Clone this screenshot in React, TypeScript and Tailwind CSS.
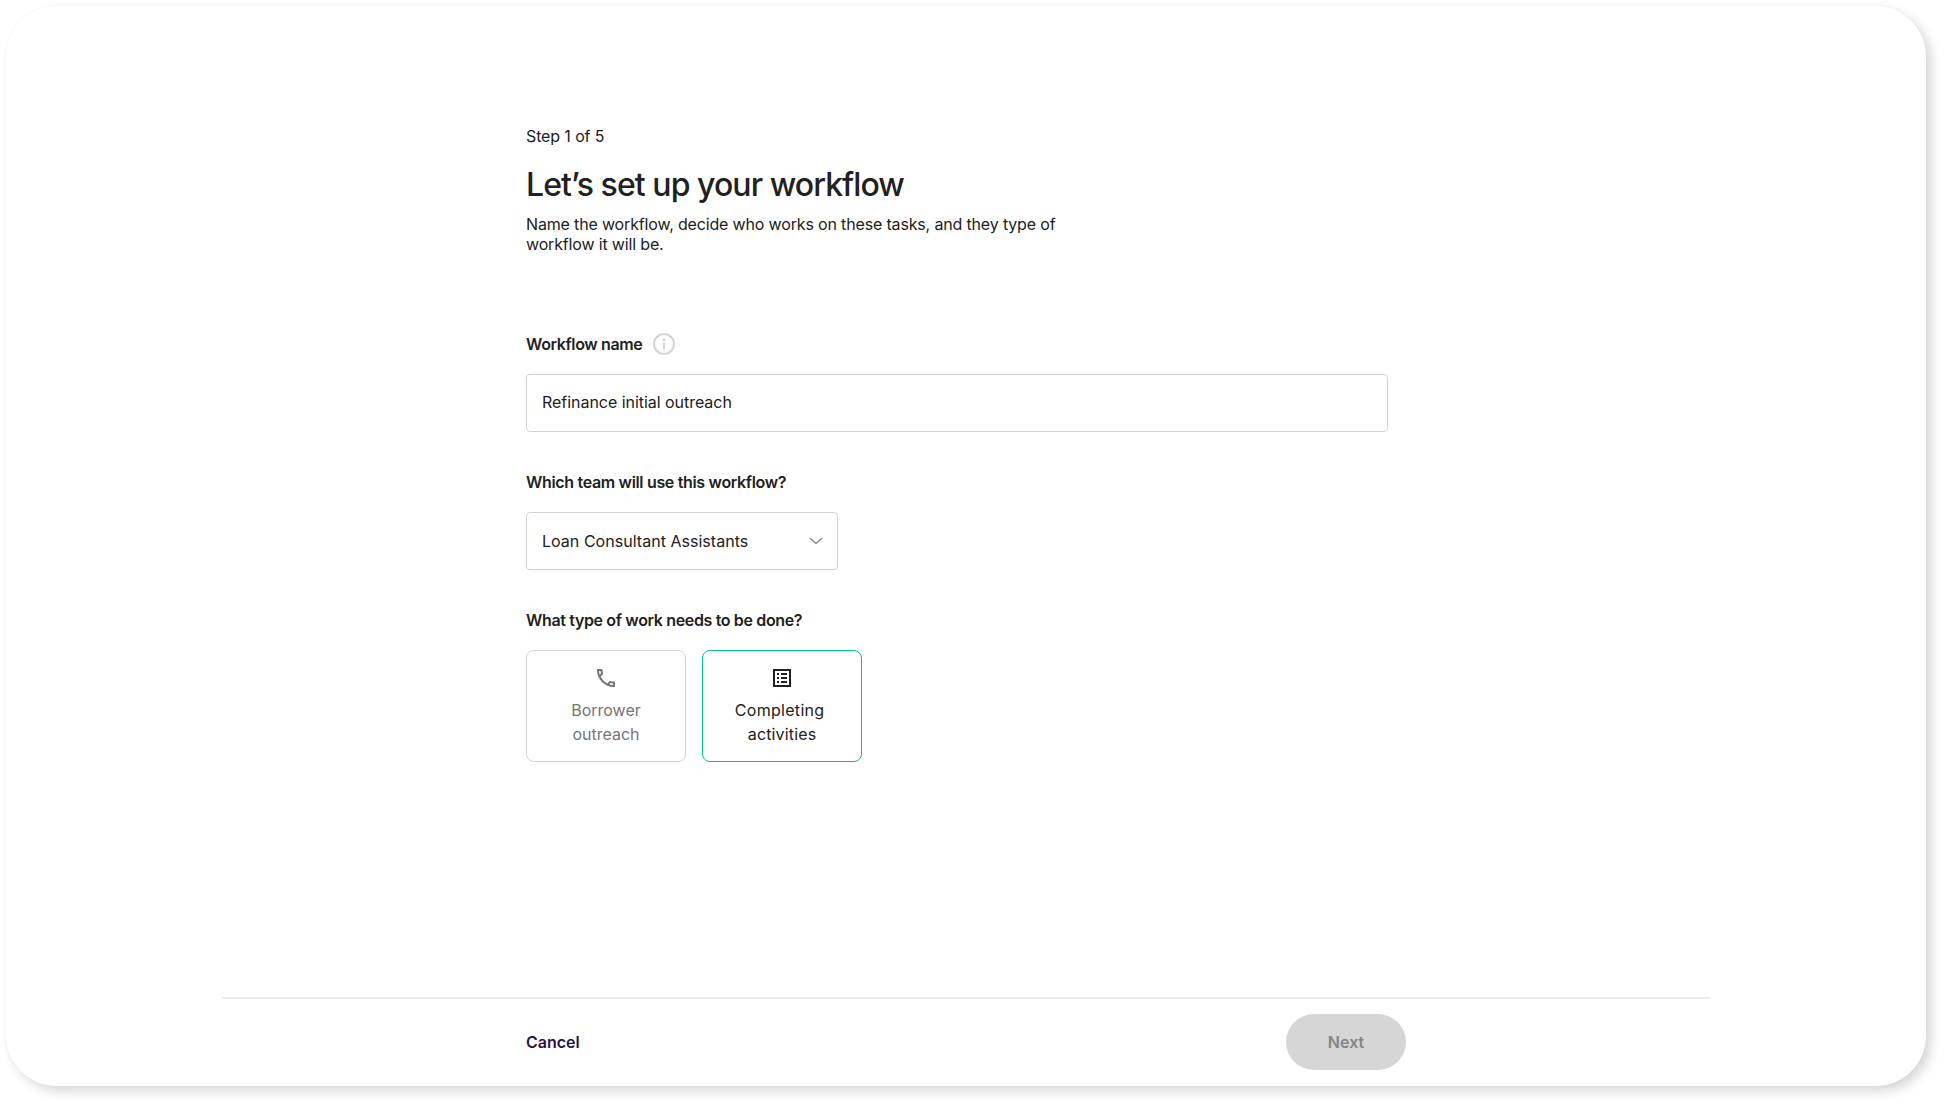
import type { ReactNode } from "react";

function InfoIcon() {
  return (
    <svg className="size-[22px] shrink-0" viewBox="0 0 22 22" fill="none">
      <circle cx="11" cy="11" r="10" stroke="#d4d4d4" strokeWidth="2" />
      <circle cx="11" cy="6.8" r="1.3" fill="#d4d4d4" />
      <path d="M11 9.4V16.6" stroke="#d4d4d4" strokeWidth="2" />
    </svg>
  );
}

function ChevronIcon() {
  return (
    <svg className="h-2 w-[14px] shrink-0" viewBox="0 0 14 8" fill="none">
      <path d="M1 1.2L7 6.3L13 1.2" stroke="#8a8a8a" strokeWidth="1.5" />
    </svg>
  );
}

function PhoneIcon() {
  return (
    <svg className="size-6" viewBox="0 0 24 24" fill="currentColor">
      <path d="M6.54 5c.06.89.21 1.76.45 2.59l-1.2 1.2c-.41-1.2-.67-2.47-.76-3.79h1.51m9.86 12.02c.85.24 1.72.39 2.6.45v1.49c-1.32-.09-2.59-.35-3.8-.75l1.2-1.19M7.5 3H4c-.55 0-1 .45-1 1 0 9.39 7.61 17 17 17 .55 0 1-.45 1-1v-3.49c0-.55-.45-1-1-1-1.24 0-2.45-.2-3.57-.57a.84.84 0 0 0-.31-.05c-.26 0-.51.1-.71.29l-2.2 2.2a15.15 15.15 0 0 1-6.59-6.59l2.2-2.2c.28-.28.36-.67.25-1.02A11.36 11.36 0 0 1 8.5 4c0-.55-.45-1-1-1z" />
    </svg>
  );
}

function ListIcon() {
  return (
    <svg className="size-6" viewBox="0 0 24 24" fill="currentColor">
      <path d="M11 7h6v2h-6zM11 11h6v2h-6zM11 15h6v2h-6zM7 7h2v2H7zM7 11h2v2H7zM7 15h2v2H7z" />
      <path fillRule="evenodd" d="M3 3h18v18H3zM5 5v14h14V5z" />
    </svg>
  );
}

function WorkCard({ icon, children, className }: { icon: ReactNode; children: ReactNode; className: string }) {
  return (
    <button className={`flex h-28 w-40 flex-col items-center gap-2 rounded-lg border pt-[15px] ${className}`}>
      {icon}
      <span className="text-center leading-6">{children}</span>
    </button>
  );
}

export default function App() {
  return (
    <div className="h-[1104px] w-[1944px] overflow-hidden bg-white p-1.5 font-['Inter',sans-serif] text-base text-[#212121]">
      <main className="flex h-[1080px] w-[1920px] flex-col rounded-[50px] bg-white shadow-[0_0_1px_rgba(0,0,0,0.08),5px_5px_11px_rgba(0,0,0,0.16)]">
        <div className="ml-[520px] flex w-[862px] flex-1 flex-col pt-[118px]">
          <p className="leading-6 tracking-[-0.12px]">Step 1 of 5</p>
          <h1 className="mt-[17px] text-[32px] leading-10 font-medium tracking-[-0.93px]">Let’s set up your workflow</h1>
          <p className="mt-[9px] leading-5 tracking-[-0.16px]">
            Name the workflow, decide who works on these tasks, and they type of
            <br />
            workflow it will be.
          </p>

          <div className="mt-[78px] flex h-6 items-center gap-[11px]">
            <label className="font-semibold tracking-[-0.37px]">Workflow name</label>
            <InfoIcon />
          </div>
          <div className="mt-[18px] flex h-[58px] items-center rounded border border-[#d4d4d4] px-[15px] pb-0.5">
            <span className="tracking-[-0.04px]">Refinance initial outreach</span>
          </div>

          <label className="mt-[38px] leading-6 font-semibold tracking-[-0.33px]">Which team will use this workflow?</label>
          <div className="mt-[18px] flex h-[58px] w-[312px] items-center justify-between rounded border border-[#d4d4d4] pr-[14px] pl-[15px]">
            <span className="tracking-[0.03px]">Loan Consultant Assistants</span>
            <ChevronIcon />
          </div>

          <p className="mt-[38px] leading-6 font-semibold tracking-[-0.35px]">What type of work needs to be done?</p>
          <div className="mt-[18px] flex gap-4">
            <WorkCard icon={<PhoneIcon />} className="border-[#d4d4d4] text-[#757575]">
              Borrower
              <br />
              outreach
            </WorkCard>
            <WorkCard icon={<ListIcon />} className="border-[#00c096]">
              <span className="tracking-[0.3px]">Completing&nbsp;</span>
              <br />
              <span className="tracking-[0.15px]">activities</span>
            </WorkCard>
          </div>
        </div>

        <footer className="mx-[216px] flex h-[89px] items-start justify-between border-t-2 border-[#ebebeb] pt-[15px] pr-[304px] pl-[304px]">
          <button className="h-14 font-semibold text-[#2a1546]">Cancel</button>
          <button className="h-14 w-[120px] rounded-full bg-[#d6d6d6] font-semibold text-[#858585]">Next</button>
        </footer>
      </main>
    </div>
  );
}
